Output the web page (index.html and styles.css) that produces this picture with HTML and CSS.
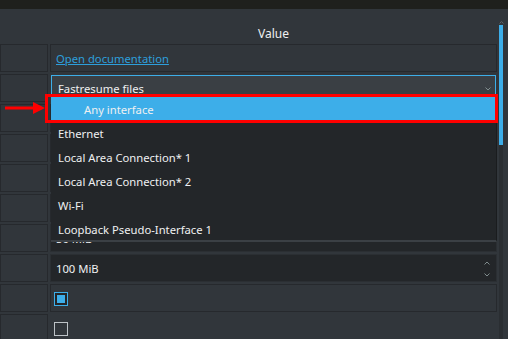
FILE: index.html
```html
<!DOCTYPE html>
<html lang="en">

<head>
    <meta charset="UTF-8">
    <meta name="viewport" content="width=device-width, initial-scale=1.0">
    <title>Advanced settings</title>
    <link rel="stylesheet" href="styles.css">
</head>

<body>
    <div class="topbar"></div>
    <div class="main">
        <div class="table">
            <div class="header">
                <div></div>
                <div class="head-value">Value</div>
            </div>
            <div class="row">
                <div class="key"></div>
                <div class="value"><a class="link" href="#">Open documentation</a></div>
            </div>
            <div class="row">
                <div class="key"></div>
                <div class="value combo">
                    <span>Fastresume files</span>
                    <svg class="chev" width="6" height="4" viewBox="0 0 6 4"><path d="M0.5 0.5 L3 3 L5.5 0.5" fill="none" stroke="#7f8c8d" stroke-width="1"/></svg>
                </div>
            </div>
            <div class="row">
                <div class="key"></div>
                <div class="value"></div>
            </div>
            <div class="row">
                <div class="key"></div>
                <div class="value"></div>
            </div>
            <div class="row">
                <div class="key"></div>
                <div class="value"></div>
            </div>
            <div class="row">
                <div class="key"></div>
                <div class="value"></div>
            </div>
            <div class="row">
                <div class="key"></div>
                <div class="value spin"><span>50 MiB</span></div>
            </div>
            <div class="row">
                <div class="key"></div>
                <div class="value spin">
                    <span>100 MiB</span>
                    <div class="arrows">
                        <svg width="6" height="4" viewBox="0 0 6 4"><path d="M0.5 3.5 L3 1 L5.5 3.5" fill="none" stroke="#7f8c8d" stroke-width="1"/></svg>
                        <svg width="6" height="4" viewBox="0 0 6 4"><path d="M0.5 0.5 L3 3 L5.5 0.5" fill="none" stroke="#7f8c8d" stroke-width="1"/></svg>
                    </div>
                </div>
            </div>
            <div class="row">
                <div class="key"></div>
                <div class="value"><span class="check on"></span></div>
            </div>
            <div class="row">
                <div class="key"></div>
                <div class="value plain"><span class="check"></span></div>
            </div>
        </div>
        <div class="scroll">
            <svg class="up" width="5" height="3" viewBox="0 0 5 3"><path d="M0.5 2.5 L2.5 0.5 L4.5 2.5" fill="none" stroke="#5c6166" stroke-width="1"/></svg>
            <div class="track">
                <div class="thumb"></div>
            </div>
        </div>
    </div>

    <div class="popup">
        <div class="item selected">Any interface</div>
        <div class="item">Ethernet</div>
        <div class="item">Local Area Connection* 1</div>
        <div class="item">Local Area Connection* 2</div>
        <div class="item">Wi-Fi</div>
        <div class="item">Loopback Pseudo-Interface 1</div>
    </div>

    <div class="mark"></div>
    <svg class="arrow" width="42" height="14" viewBox="0 0 42 14">
        <line x1="1" y1="7" x2="32" y2="7" stroke="#ff0000" stroke-width="3"/>
        <polygon points="29,1 41,7 29,13" fill="#ff0000"/>
    </svg>
</body>

</html>
```

FILE: styles.css
```css
* {
    padding: 0;
    margin: 0;
    box-sizing: border-box;
}

body {
    width: 508px;
    height: 339px;
    overflow: hidden;
    position: relative;
    background: #31363b;
    color: #eff0f1;
    font-family: "Noto Sans", "Open Sans", sans-serif;
    font-size: 11.25px;
}

.topbar {
    height: 9px;
    background: #1f201d;
}

.main {
    display: flex;
}

.table {
    width: 497px;
}

.header {
    height: 35px;
    display: grid;
    grid-template-columns: 50px 447px;
}

.header .head-value {
    text-align: center;
    padding-top: 16px;
    font-size: 12px;
}

.row {
    height: 30px;
    display: grid;
    grid-template-columns: 48px 447px;
    column-gap: 2px;
    padding-bottom: 2px;
}

.row .key {
    border: 1px solid #26292d;
}

.row .value {
    border: 1px solid #26292d;
    display: flex;
    align-items: center;
    padding-left: 5px;
    padding-top: 1px;
}

.row .value.plain {
    border-color: transparent;
}

.link {
    color: #2d9fdc;
    text-decoration: underline;
}

.row .combo {
    margin: 1px 1px 0 1px;
    height: 26px;
    border: 1px solid #3daee9;
    background: #3a3f44;
    padding-left: 6px;
    justify-content: space-between;
    padding-right: 4px;
}

.row .spin {
    background: #232629;
    border-color: #2b2f33;
    justify-content: space-between;
    padding-right: 6px;
}

.spin .arrows {
    display: flex;
    flex-direction: column;
    gap: 8px;
}

.check {
    width: 14px;
    height: 14px;
    border: 1px solid #bdc3c7;
    margin-left: -2px;
}

.check.on {
    border-color: #3daee9;
    background: #3daee9;
    box-shadow: inset 0 0 0 2px #232629;
}

.scroll {
    width: 11px;
    display: flex;
    flex-direction: column;
    padding-left: 2px;
}

.scroll .up {
    margin: 12px 0 0 0;
}

.scroll .track {
    width: 4px;
    margin-top: 1px;
    flex: 1;
    background: #2a2e32;
    height: 313px;
}

.scroll .thumb {
    height: 120px;
    background: #3daee9;
}

.popup {
    position: absolute;
    left: 51px;
    top: 94px;
    width: 446px;
    height: 148px;
    background: #232629;
    border-right: 1px solid #1a1c1e;
    border-bottom: 2px solid #3b4045;
    padding-top: 3px;
}

.popup .item {
    height: 24px;
    line-height: 25px;
    padding-left: 7px;
}

.popup .item.selected {
    background: #3daee9;
    padding-left: 33px;
}

.mark {
    position: absolute;
    left: 45px;
    top: 94px;
    width: 453px;
    height: 29px;
    border: 3px solid #ff0000;
}

.arrow {
    position: absolute;
    left: 4px;
    top: 101px;
}
```
